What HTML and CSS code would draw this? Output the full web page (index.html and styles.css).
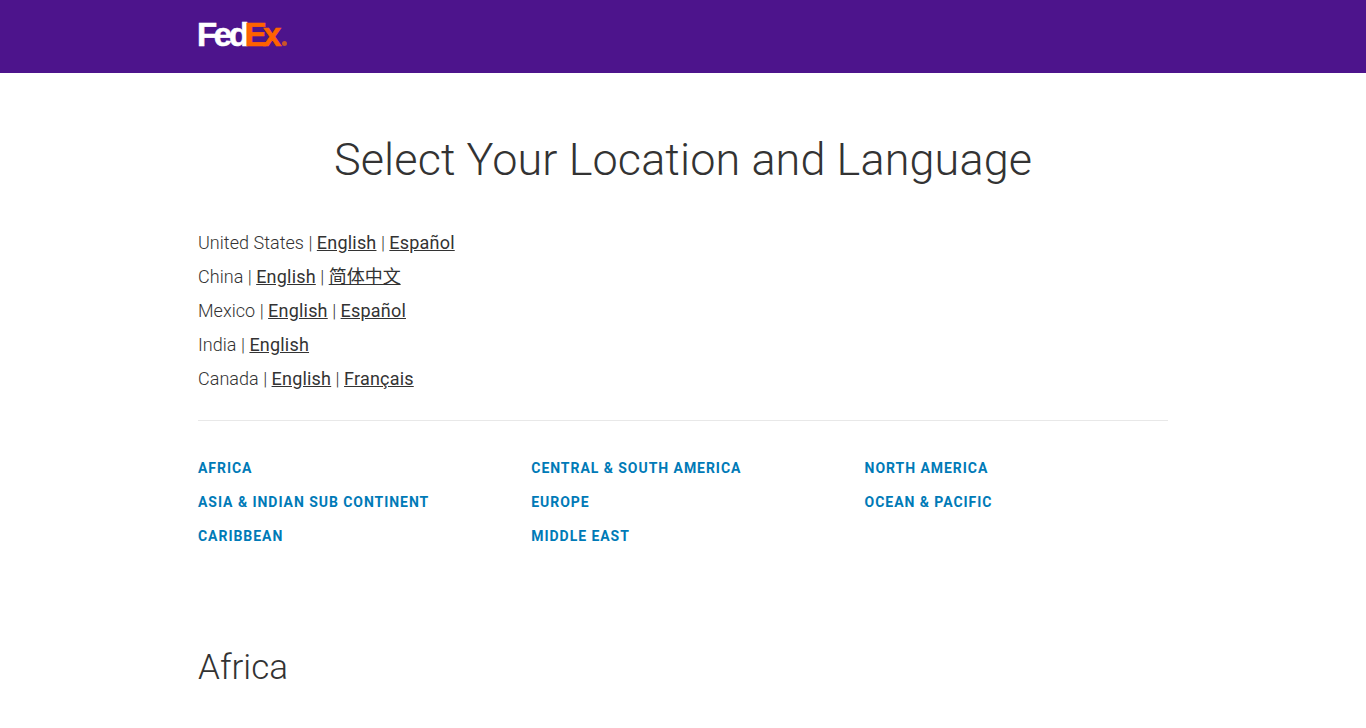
FILE: index.html
```html
<!DOCTYPE html>
<html lang="en">
<head>
<meta charset="utf-8">
<title>FedEx - Select Your Location and Language</title>
<link rel="stylesheet" href="styles.css">
</head>
<body>
<header class="topbar">
  <div class="wrap topbar-inner">
    <a class="logo" href="#"><span class="logo-fed">Fed</span><span class="logo-ex">Ex</span><span class="logo-dot"></span></a>
  </div>
</header>
<main class="wrap">
  <h1 class="title">Select Your Location and Language</h1>
  <ul class="featured">
    <li>United States | <a href="#">English</a> | <a href="#">Español</a></li>
    <li>China | <a href="#">English</a> | <a class="cjk" href="#" lang="zh-CN">简体中文</a></li>
    <li>Mexico | <a href="#">English</a> | <a href="#">Español</a></li>
    <li>India | <a href="#">English</a></li>
    <li>Canada | <a href="#">English</a> | <a href="#">Français</a></li>
  </ul>
  <nav class="regions">
    <a href="#">Africa</a>
    <a href="#">Central &amp; South America</a>
    <a href="#">North America</a>
    <a href="#">Asia &amp; Indian Sub Continent</a>
    <a href="#">Europe</a>
    <a href="#">Ocean &amp; Pacific</a>
    <a href="#">Caribbean</a>
    <a href="#">Middle East</a>
  </nav>
  <h2 class="region-title">Africa</h2>
</main>
</body>
</html>
```
FILE: styles.css
```css
* { box-sizing: border-box; }
html, body { margin: 0; padding: 0; height: 728px; overflow: hidden; }
body { background: #fff; color: #333; font-family: Roboto, "Noto Sans CJK SC", sans-serif; }
.wrap { width: 970px; margin: 0 auto; }
.topbar { background: #4d148c; height: 73px; }
.topbar-inner { display: flex; align-items: flex-start; padding-top: 19px; }
.logo { display: flex; align-items: baseline; margin-left: -1px; text-decoration: none; font-family: "Liberation Sans", sans-serif; font-weight: 700; font-size: 33px; line-height: 32px; letter-spacing: -3.3px; -webkit-text-stroke: 0.6px; }
.logo-fed { color: #fff; -webkit-text-stroke-color: #fff; }
.logo-ex { margin-left: -1px; letter-spacing: -3.8px; color: #ff6200; -webkit-text-stroke-color: #ff6200; }
.logo-dot { width: 5px; height: 5px; margin-left: 4px; border-radius: 50%; background: #c8552a; }
.title { margin: 0; padding-top: 59px; text-align: center; font-weight: 300; font-size: 45px; line-height: 56px; letter-spacing: 0.1px; color: #333; }
.featured { list-style: none; margin: 0; padding: 38px 0 24px; border-bottom: 1px solid #e8e8e8; font-weight: 300; font-size: 18px; line-height: 34px; letter-spacing: 0.03px; }
.featured a { color: #333; font-weight: 400; text-decoration: underline; letter-spacing: 0.2px; }
.featured .cjk { letter-spacing: 0; }
.regions { display: grid; grid-template-columns: repeat(3, 333.3px); grid-template-rows: repeat(3, 34px); margin-right: -30px; padding-top: 30px; }
.regions a { color: #007ab7; font-weight: 700; font-size: 14px; line-height: 34px; letter-spacing: 0.95px; text-transform: uppercase; text-decoration: none; }
.region-title { margin: 0; padding-top: 93px; font-weight: 300; font-size: 35px; line-height: 44px; color: #333; }
```
